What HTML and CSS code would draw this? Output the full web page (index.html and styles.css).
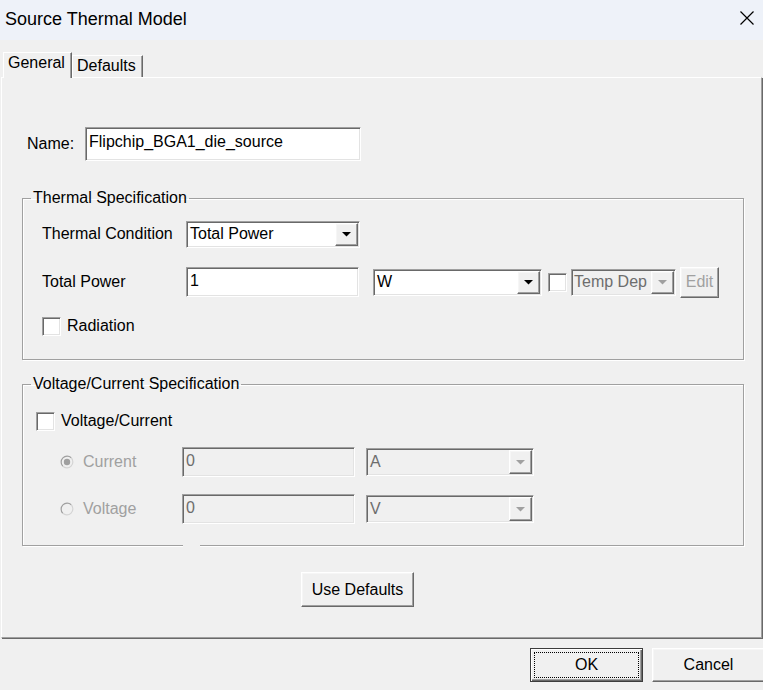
FILE: index.html
```html
<!DOCTYPE html>
<html>
<head>
<meta charset="utf-8">
<title>Source Thermal Model</title>
<link rel="stylesheet" href="styles.css">
</head>
<body>
<div class="window">
  <header class="titlebar">
    <span class="title">Source Thermal Model</span>
    <svg class="close" width="16" height="16" viewBox="0 0 16 16"><path d="M1.5 1.5L14.5 14.5M14.5 1.5L1.5 14.5" stroke="#000" stroke-width="1.2" fill="none"/></svg>
  </header>
  <nav class="tabs">
    <div class="tab tab-active">General</div>
    <div class="tab tab-inactive">Defaults</div>
  </nav>
  <main class="panel">
    <div class="name-row">
      <span class="name-label">Name:</span>
      <div class="field sunken name-field">Flipchip_BGA1_die_source</div>
    </div>

    <fieldset class="group group-thermal">
      <legend>Thermal Specification</legend>
      <div class="group-body thermal-body">
        <div class="row row-cond">
          <span class="row-label">Thermal Condition</span>
          <div class="select sunken sel-cond"><span class="sel-text">Total Power</span><span class="sel-btn raised"><i class="arrow"></i></span></div>
        </div>
        <div class="row row-power">
          <span class="row-label">Total Power</span>
          <div class="field sunken power-field">1</div>
          <div class="select sunken sel-unit"><span class="sel-text">W</span><span class="sel-btn raised"><i class="arrow"></i></span></div>
          <span class="check sunken check-temp"></span>
          <div class="select sunken is-disabled sel-temp"><span class="sel-text">Temp Dep</span><span class="sel-btn raised"><i class="arrow"></i></span></div>
          <button class="btn raised btn-edit" disabled>Edit</button>
        </div>
        <div class="row row-rad">
          <span class="check sunken"></span><span class="check-label">Radiation</span>
        </div>
      </div>
    </fieldset>

    <fieldset class="group group-vc">
      <legend>Voltage/Current Specification</legend>
      <div class="group-body vc-body">
        <div class="row row-vc">
          <span class="check sunken"></span><span class="check-label">Voltage/Current</span>
        </div>
        <div class="row row-current">
          <span class="radio-wrap">
            <svg class="radio" width="14" height="14" viewBox="0 0 14 14"><circle cx="7" cy="7" r="6" fill="#f0f0f0"/><path d="M2.76 11.24A6 6 0 0 1 11.24 2.76" stroke="#a0a0a0" stroke-width="1.2" fill="none"/><path d="M11.24 2.76A6 6 0 0 1 2.76 11.24" stroke="#d4d4d4" stroke-width="1.2" fill="none"/><circle cx="7" cy="7" r="3.2" fill="#a0a0a0"/></svg>
            <span class="radio-label">Current</span>
          </span>
          <div class="field sunken is-disabled vc-field">0</div>
          <div class="select sunken is-disabled sel-vc"><span class="sel-text">A</span><span class="sel-btn raised"><i class="arrow"></i></span></div>
        </div>
        <div class="row row-voltage">
          <span class="radio-wrap">
            <svg class="radio" width="14" height="14" viewBox="0 0 14 14"><circle cx="7" cy="7" r="6" fill="#f0f0f0"/><path d="M2.76 11.24A6 6 0 0 1 11.24 2.76" stroke="#a0a0a0" stroke-width="1.2" fill="none"/><path d="M11.24 2.76A6 6 0 0 1 2.76 11.24" stroke="#d4d4d4" stroke-width="1.2" fill="none"/></svg>
            <span class="radio-label">Voltage</span>
          </span>
          <div class="field sunken is-disabled vc-field">0</div>
          <div class="select sunken is-disabled sel-vc"><span class="sel-text">V</span><span class="sel-btn raised"><i class="arrow"></i></span></div>
        </div>
      </div>
      <span class="border-gap"></span>
    </fieldset>

    <div class="defaults-row">
      <button class="btn raised btn-defaults">Use Defaults</button>
    </div>
  </main>
  <footer class="footer">
    <button class="btn btn-ok"><span class="focus">OK</span></button>
    <button class="btn raised btn-cancel">Cancel</button>
  </footer>
</div>
</body>
</html>
```

FILE: styles.css
```css
html, body {
  margin: 0;
  padding: 0;
  overflow: hidden;
}
body {
  background: #f0f0f0;
  font-family: "Liberation Sans", Arial, sans-serif;
  font-size: 16px;
  color: #000;
  width: 763px;
  height: 690px;
}
.window {
  width: 763px;
  height: 690px;
}

/* title bar */
.titlebar {
  height: 40px;
  background: #eef2f9;
  display: flex;
  align-items: center;
  justify-content: space-between;
  padding: 0 8px 0 5px;
  box-sizing: border-box;
}
.title {
  font-size: 18px;
  line-height: 20px;
  padding-bottom: 3px;
}
.close {
  display: block;
  margin-bottom: 4px;
}

/* tabs */
.tabs {
  display: flex;
  align-items: flex-start;
  height: 25px;
  margin-top: 12px;
  padding-left: 3px;
  position: relative;
  z-index: 2;
}
.tab {
  box-sizing: border-box;
  background: #f0f0f0;
  border-left: 1px solid #fff;
  border-top: 1px solid #fff;
  border-right: 1px solid #696969;
  box-shadow: inset -1px 0 0 #a0a0a0;
  padding-left: 4px;
  line-height: 18px;
  padding-top: 1px;
}
.tab-active {
  width: 69px;
  height: 26px;
}
.tab-inactive {
  width: 71px;
  height: 22px;
  margin-top: 3px;
}

/* panel */
.panel {
  margin-left: 1px;
  width: 761px;
  height: 561px;
  box-sizing: border-box;
  border-top: 1px solid #fff;
  border-left: 1px solid #fff;
  border-right: 1px solid #a0a0a0;
  border-bottom: 1px solid #a0a0a0;
  box-shadow: 1px 1px 0 #696969;
  position: relative;
  z-index: 1;
}

/* 3D styles */
.sunken {
  border: 1px solid;
  border-color: #a0a0a0 #fff #fff #a0a0a0;
  box-shadow: inset 1px 1px 0 #696969, inset -1px -1px 0 #e3e3e3;
  box-sizing: border-box;
}
.raised {
  border: 1px solid;
  border-color: #fff #696969 #696969 #fff;
  box-shadow: inset -1px -1px 0 #a0a0a0, inset 1px 1px 0 #f6f6f6;
  box-sizing: border-box;
  background: #f0f0f0;
}

/* name row */
.name-row {
  display: flex;
  align-items: center;
  margin-top: 49px;
  padding-left: 25px;
  height: 34px;
}
.name-label {
  width: 58px;
}

.field {
  display: flex;
  align-items: center;
  background: #fff;
  padding: 0 0 3px 3px;
  white-space: nowrap;
}
.name-field {
  width: 276px;
  height: 34px;
  padding-bottom: 5px;
}
.field.is-disabled {
  background: #f0f0f0;
  color: #6d6d6d;
}

/* group boxes */
.group {
  margin: 0 0 0 20px;
  padding: 0;
  width: 722px;
  box-sizing: border-box;
  min-inline-size: 0;
  border: 1px solid #a0a0a0;
  box-shadow: 1px 1px 0 #fff, inset 1px 1px 0 #fff;
  position: relative;
}
.group legend {
  margin-left: 8px;
  padding: 0 2px;
  line-height: 18px;
  height: 18px;
}
.group-thermal {
  margin-top: 28px;
}
.group-vc {
  margin-top: 15px;
}
.thermal-body {
  padding: 12px 0 18px 19px;
}
.vc-body {
  padding: 13px 0 21px 13px;
}
.row {
  display: flex;
  align-items: center;
  height: 30px;
}
.row-power { margin-top: 18px; }
.row-rad { margin-top: 14px; }
.row-current { margin-top: 11px; }
.row-voltage { margin-top: 17px; }

.row-label {
  width: 144px;
  flex: none;
}

/* select */
.select {
  display: flex;
  align-items: stretch;
  background: #fff;
  padding: 1px;
  height: 27px;
  flex: none;
}
.sel-text {
  flex: 1;
  display: flex;
  align-items: center;
  padding-left: 2px;
  white-space: nowrap;
  overflow: hidden;
}
.sel-btn {
  width: 23px;
  flex: none;
  display: flex;
  align-items: center;
  justify-content: center;
}
.arrow {
  display: block;
  width: 10px;
  height: 5px;
  background: #000;
  clip-path: polygon(0 0, 100% 0, 50% 100%);
}
.select.is-disabled {
  background: #f0f0f0;
  color: #6d6d6d;
}
.select.is-disabled .arrow {
  background: #a0a0a0;
}
.sel-cond { width: 174px; }
.power-field {
  width: 173px;
  height: 30px;
  margin-right: 14px;
}
.sel-unit {
  width: 169px;
  margin-right: 6px;
}
.check {
  display: block;
  width: 19px;
  height: 19px;
  background: #fff;
  flex: none;
}
.check-temp {
  margin-right: 4px;
}
.sel-temp {
  width: 105px;
  margin-right: 4px;
  color: #8a8a8a;
}
.sel-temp .sel-text {
  padding-left: 1px;
}
.check-label {
  margin-left: 6px;
}

/* buttons */
.btn {
  font-family: "Liberation Sans", Arial, sans-serif;
  font-size: 16px;
  color: #000;
  padding: 0;
  margin: 0;
  display: flex;
  align-items: center;
  justify-content: center;
}
.btn-edit {
  width: 39px;
  height: 31px;
  color: #a0a0a0;
}

/* voltage / current */
.radio-wrap {
  display: flex;
  align-items: center;
  width: 122px;
  margin-left: 24px;
  box-sizing: border-box;
  flex: none;
}
.radio {
  display: block;
  flex: none;
}
.radio-label {
  margin-left: 9px;
  color: #a0a0a0;
}
.vc-field {
  width: 173px;
  height: 30px;
  margin-right: 11px;
}
.sel-vc {
  width: 168px;
  height: 28px;
}
.border-gap {
  position: absolute;
  left: 160px;
  bottom: -2px;
  width: 17px;
  height: 2px;
  background: #f0f0f0;
}

/* defaults button */
.defaults-row {
  margin-top: 26px;
  padding-left: 299px;
}
.btn-defaults {
  width: 113px;
  height: 35px;
}

/* footer */
.footer {
  display: flex;
  padding: 10px 0 0 530px;
}
.btn-ok {
  width: 113px;
  height: 34px;
  box-sizing: border-box;
  border: 1px solid #3c3c3c;
  background: #f0f0f0;
  box-shadow: inset 1px 1px 0 #fff, inset -1px -1px 0 #696969, inset -2px -2px 0 #a0a0a0;
  padding: 3px;
  flex: none;
}
.focus {
  flex: 1;
  align-self: stretch;
  display: flex;
  align-items: center;
  justify-content: center;
  border: 1px dotted #000;
}
.btn-cancel {
  width: 113px;
  height: 34px;
  margin-left: 9px;
  flex: none;
}
```
